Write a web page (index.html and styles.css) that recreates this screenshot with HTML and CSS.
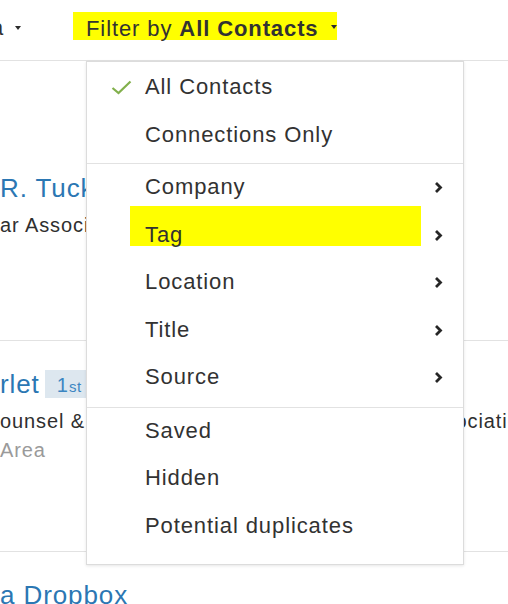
FILE: index.html
```html
<!DOCTYPE html>
<html lang="en">
<head>
    <meta charset="UTF-8">
    <meta name="viewport" content="width=device-width, initial-scale=1.0">
    <title>Contacts - Filter by</title>
    <link rel="stylesheet" href="styles.css">
</head>
<body>

    <div class="page">
        <!-- toolbar: sort + filter -->
        <header class="toolbar">
            <span class="sort">
                <span class="sort-label">a</span>
                <span class="caret"></span>
            </span>
            <span class="filter">
                Filter by <b>All Contacts</b><span class="caret caret-filter"></span>
            </span>
        </header>

        <!-- contact list behind the dropdown -->
        <main class="contacts">
            <div class="contact contact-first">
                <div class="contact-name">R. Tucker</div>
                <div class="contact-headline">ar Association</div>
            </div>
            <div class="contact">
                <div class="contact-name">rlet <span class="degree">1<small>st</small></span></div>
                <div class="contact-headline">ounsel &amp; Deputy General Counsel, DC Bar Association</div>
                <div class="contact-location">Area</div>
            </div>
            <div class="contact">
                <div class="contact-name">a Dropbox</div>
            </div>
        </main>

        <!-- filter dropdown -->
        <div class="menu">
            <ul class="menu-group menu-group-first">
                <li class="menu-item">
                    <span class="menu-check">
                        <svg width="21" height="15" viewBox="0 0 21 15"><path d="M1.5 8 L7.5 13 L19.5 1.5" fill="none" stroke="#82b04c" stroke-width="2.2"/></svg>
                    </span>
                    <span class="menu-label">All Contacts</span>
                </li>
                <li class="menu-item">
                    <span class="menu-check"></span>
                    <span class="menu-label">Connections Only</span>
                </li>
            </ul>
            <ul class="menu-group">
                <li class="menu-item"><span class="menu-check"></span><span class="menu-label">Company</span><svg class="menu-arrow" width="9" height="13" viewBox="0 0 9 13"><path d="M2 2 L6.5 6.5 L2 11" fill="none" stroke="#262626" stroke-width="2.8"/></svg></li>
                <li class="menu-item menu-item-marked"><span class="menu-check"></span><span class="menu-label">Tag</span><svg class="menu-arrow" width="9" height="13" viewBox="0 0 9 13"><path d="M2 2 L6.5 6.5 L2 11" fill="none" stroke="#262626" stroke-width="2.8"/></svg></li>
                <li class="menu-item"><span class="menu-check"></span><span class="menu-label">Location</span><svg class="menu-arrow" width="9" height="13" viewBox="0 0 9 13"><path d="M2 2 L6.5 6.5 L2 11" fill="none" stroke="#262626" stroke-width="2.8"/></svg></li>
                <li class="menu-item"><span class="menu-check"></span><span class="menu-label">Title</span><svg class="menu-arrow" width="9" height="13" viewBox="0 0 9 13"><path d="M2 2 L6.5 6.5 L2 11" fill="none" stroke="#262626" stroke-width="2.8"/></svg></li>
                <li class="menu-item"><span class="menu-check"></span><span class="menu-label">Source</span><svg class="menu-arrow" width="9" height="13" viewBox="0 0 9 13"><path d="M2 2 L6.5 6.5 L2 11" fill="none" stroke="#262626" stroke-width="2.8"/></svg></li>
            </ul>
            <ul class="menu-group menu-group-last">
                <li class="menu-item"><span class="menu-check"></span><span class="menu-label">Saved</span></li>
                <li class="menu-item"><span class="menu-check"></span><span class="menu-label">Hidden</span></li>
                <li class="menu-item"><span class="menu-check"></span><span class="menu-label">Potential duplicates</span></li>
            </ul>
        </div>
    </div>

</body>
</html>
```

FILE: styles.css
```css
/* --- Base --- */
:root {
    --text-dark: #323232;
    --text-muted: #9a9a9a;
    --link-blue: #2b77b3;
    --line: #e2e2e2;
    --marker: #ffff00;
}
* { margin: 0; padding: 0; box-sizing: border-box; }
body { font-family: 'Liberation Sans', Arial, Helvetica, sans-serif; letter-spacing: 0.9px; color: var(--text-dark); background: #fff; }
.page { position: relative; width: 508px; height: 604px; overflow: hidden; }

/* --- Toolbar --- */
.toolbar { display: flex; align-items: flex-start; height: 61px; padding-top: 12px; border-bottom: 1px solid var(--line); font-size: 22px; }
.sort { display: flex; align-items: center; width: 82px; height: 28px; margin-left: -9px; padding-top: 3px; }
.caret { display: inline-block; width: 0; height: 0; border-left: 3.5px solid transparent; border-right: 3.5px solid transparent; border-top: 4px solid #2b2b2b; margin-left: 11px; }
.filter { height: 28px; width: 264px; padding: 4px 0 0 13px; line-height: 25px; background: var(--marker); white-space: nowrap; }
.filter b { font-weight: 700; }
.caret-filter { margin-left: 12px; vertical-align: 7px; }

/* --- Contact rows (sit under the menu) --- */
.contact { height: 211px; padding-top: 28px; border-bottom: 1px solid var(--line); white-space: nowrap; }
.contact-first { height: 280px; padding-top: 112px; }
.contact-name { font-size: 26px; line-height: 30px; color: var(--link-blue); }
.contact-headline { margin-top: 9px; font-size: 20px; line-height: 26px; color: #2f2f2f; }
.contact-location { margin-top: 3px; font-size: 20px; line-height: 26px; color: var(--text-muted); }
.degree { display: inline-block; height: 28px; margin-left: -3px; padding: 0 10px 0 12px; background: #dde7ef; color: #3c86c2; font-size: 20px; line-height: 30px; vertical-align: 1px; }
.degree small { font-size: 15px; letter-spacing: 0.5px; }

/* --- Dropdown menu --- */
.menu { position: absolute; top: 61px; left: 86px; width: 378px; height: 504px; background: #fff; border: 1px solid #dcdcdc; box-shadow: 0 1px 3px rgba(0, 0, 0, 0.1); font-size: 22px; color: var(--text-dark); }
.menu-group { list-style: none; padding-bottom: 5px; border-bottom: 1px solid var(--line); }
.menu-group-first { padding-top: 2px; padding-bottom: 4px; }
.menu-group-last { border-bottom: none; }
.menu-item { position: relative; isolation: isolate; display: flex; align-items: center; height: 47.5px; padding: 0 20px 0 24px; white-space: nowrap; }
.menu-check { display: flex; align-items: center; width: 34px; height: 15px; }
.menu-label { flex: 1; padding-bottom: 1px; }
.menu-arrow { flex: none; }
.menu-item-marked::before { content: ""; position: absolute; z-index: -1; left: 43px; top: -6px; width: 291px; height: 40px; background: var(--marker); }
```
